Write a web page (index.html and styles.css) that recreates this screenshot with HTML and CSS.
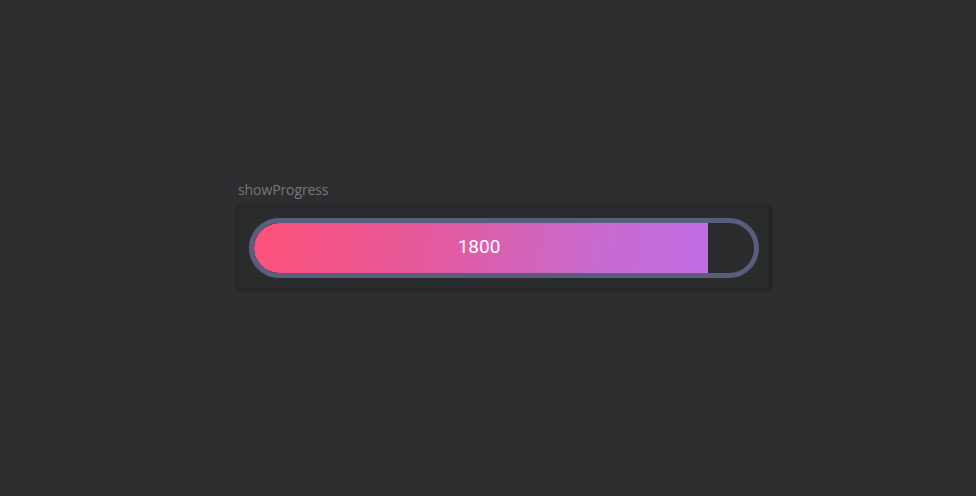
FILE: index.html
```html
<!DOCTYPE html>
<html>
<head>
<meta charset="utf-8">
<link rel="stylesheet" href="styles.css">
</head>
<body>
<div class="stage">
  <div class="widget">
    <div class="label">showProgress</div>
    <div class="panel">
      <div class="track">
        <div class="fill" style="width: 454px"><span class="value">1800</span></div>
      </div>
    </div>
  </div>
</div>
</body>
</html>
```
FILE: styles.css
```css
html, body {
  margin: 0;
  padding: 0;
  background: #2d2e30;
  width: 976px;
  height: 496px;
  overflow: hidden;
}
.stage {
  padding: 180px 0 0 236px;
}
.widget {
  display: flex;
  flex-direction: column;
  width: 534px;
}
.label {
  font-family: "Open Sans", "Noto Sans", sans-serif;
  font-size: 14px;
  line-height: 20px;
  color: #76767a;
  padding-left: 2px;
  margin-bottom: 6px;
  letter-spacing: -0.1px;
}
.panel {
  background: #2a2b2d;
  border: 1px solid #252628;
  padding: 11px 11px 10px 12px;
  box-shadow: 1px 1px 3px rgba(0,0,0,0.45);
}
.track {
  width: 500px;
  height: 50px;
  border: 5px solid #595e7c;
  border-radius: 30px;
  overflow: hidden;
  display: flex;
}
.fill {
  height: 50px;
  background: linear-gradient(100deg, #fd5178 0%, #e35a9e 40%, #c86acf 75%, #bf6ce3 100%);
  border-radius: 25px 0 0 25px;
  display: flex;
  align-items: center;
  justify-content: center;
}
.value {
  font-family: Roboto, "Noto Sans", sans-serif;
  font-size: 19px;
  color: #ffffff;
  padding: 0 4px 3px 0;
}
```
